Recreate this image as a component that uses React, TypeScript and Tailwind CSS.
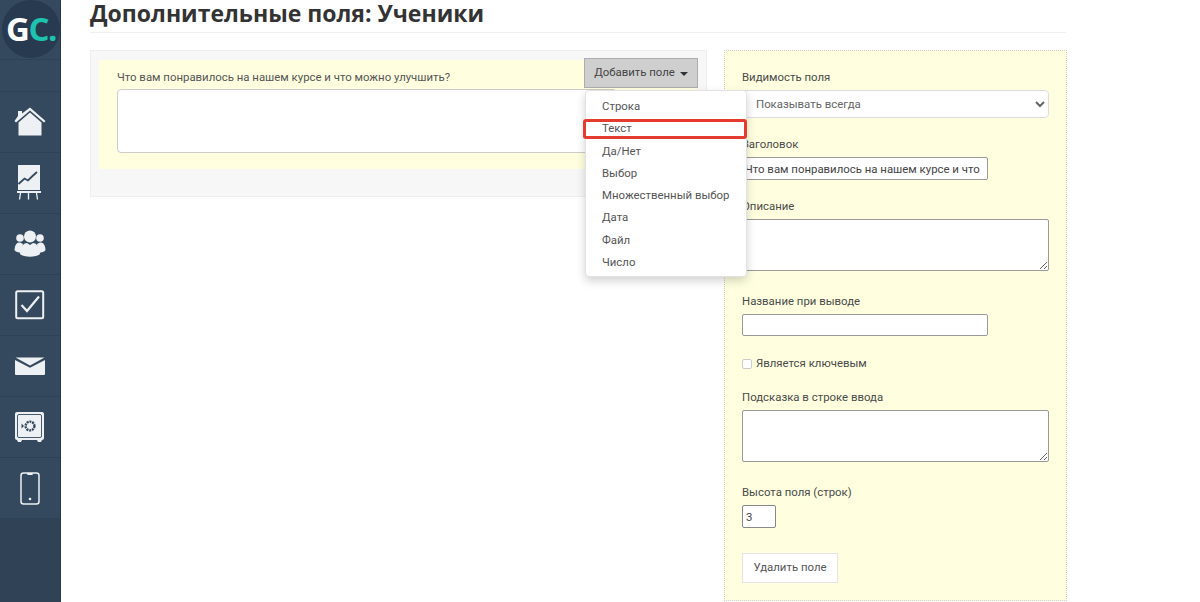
const MENU_ITEMS = ['Строка', 'Текст', 'Да/Нет', 'Выбор', 'Множественный выбор', 'Дата', 'Файл', 'Число']

const ICON = '#edf1f3'

function HomeIcon() {
  return (
    <svg width="32" height="30" viewBox="0 0 32 30">
      <path d="M4 9 V4 H8 V6.5 L16 0.5 L31.5 14 L30 15.5 L16 3.5 L2 15.5 L0.5 14 Z" fill={ICON} />
      <path d="M4.5 15.5 L16 5.5 L27.5 15.5 V28.5 H4.5 Z" fill={ICON} />
    </svg>
  )
}

function ChartIcon() {
  return (
    <svg width="26" height="36" viewBox="0 0 26 36">
      <rect x="1" y="0" width="22" height="25" fill={ICON} />
      <path d="M1.5 19 L7.5 13.5 L11 15.5 L15 11.5 L20 7" fill="none" stroke="#34495e" strokeWidth="1.8" />
      <rect x="0" y="26" width="24" height="2" fill={ICON} />
      <path d="M3.5 28 L2.5 34.5 M11.5 28 V34.5 M19.5 28 L20.5 34.5" stroke={ICON} strokeWidth="1.3" />
    </svg>
  )
}

function UsersIcon() {
  return (
    <svg width="32" height="28" viewBox="0 0 32 28">
      <circle cx="6" cy="8" r="3.8" fill={ICON} />
      <circle cx="26" cy="8" r="3.8" fill={ICON} />
      <path d="M0.5 20 C1 14 3 12.5 6 12.5 L9 14 L7.5 23 C4 22.5 1.5 22 0.5 20 Z" fill={ICON} />
      <path d="M31.5 20 C31 14 29 12.5 26 12.5 L23 14 L24.5 23 C28 22.5 30.5 22 31.5 20 Z" fill={ICON} />
      <circle cx="16" cy="6.5" r="6" fill={ICON} />
      <path d="M6 24 C7 16 10 13 13 13 L16 15 L19 13 C22 13 25 16 26 24 C22 27.5 10 27.5 6 24 Z" fill={ICON} />
    </svg>
  )
}

function CheckIcon() {
  return (
    <svg width="30" height="30" viewBox="0 0 30 30">
      <rect x="1.2" y="1.2" width="27" height="27" rx="1.5" fill="none" stroke={ICON} strokeWidth="2" />
      <path d="M6.5 15 L12 21 L24 6.5" fill="none" stroke={ICON} strokeWidth="2.2" />
    </svg>
  )
}

function MailIcon() {
  return (
    <svg width="30" height="18" viewBox="0 0 30 18">
      <path d="M0.5 0.5 H29.5 L15 8.5 Z" fill={ICON} />
      <path d="M0 3 L15 10.8 L30 3 V17 a1 1 0 0 1 -1 1 H1 a1 1 0 0 1 -1 -1 Z" fill={ICON} />
    </svg>
  )
}

function SafeIcon() {
  return (
    <svg width="30" height="31" viewBox="0 0 30 31">
      <rect x="0" y="0" width="29" height="28" rx="2" fill={ICON} />
      <rect x="2.5" y="2.5" width="24" height="23" rx="1.5" fill="none" stroke="#34495e" strokeWidth="0.9" />
      <path d="M2 28 H7 L6 30 H3 Z M22 28 H27 L26 30 H23 Z" fill={ICON} />
      <circle cx="15" cy="14" r="4.4" fill="none" stroke="#34495e" strokeWidth="2.4" strokeDasharray="2 0.8" />
      <path d="M6.5 11.5 L9 14 L6.5 16.5 Z" fill="#34495e" />
    </svg>
  )
}

function PhoneIcon() {
  return (
    <svg width="20" height="33" viewBox="0 0 20 33">
      <rect x="1" y="1" width="18" height="31" rx="2.5" fill="none" stroke={ICON} strokeWidth="1.5" />
      <path d="M7 1 H13 L12.5 3 H7.5 Z" fill={ICON} />
      <circle cx="10" cy="27" r="1.3" fill={ICON} />
    </svg>
  )
}

function NavItem({ children }: { children: React.ReactNode }) {
  return <div className="flex h-[61px] items-center justify-center border-b border-[#2e4257]">{children}</div>
}

function Field({ label, className, children }: { label: string; className: string; children: React.ReactNode }) {
  return (
    <div className={className}>
      <label className="mb-[5px] block h-[18px] leading-[20px] text-[#4a4a4a]">{label}</label>
      {children}
    </div>
  )
}

export default function App() {
  return (
    <div className="flex h-[602px] w-[1200px] overflow-hidden bg-white text-[11.4px] text-[#555] [font-family:Roboto,'Open_Sans',sans-serif]">
      <aside className="flex h-full w-[61px] shrink-0 flex-col border-r border-[#26384b] bg-[#2f4256]">
        <div className="h-[60px] border-b border-[#2e4257] bg-[#34495e] pl-[2px]">
          <div className="flex h-[58px] w-[58px] items-center justify-center rounded-full bg-[#273a4f] text-[33px] font-bold tracking-[-1.5px] [font-family:'Open_Sans',sans-serif]">
            <span className="text-white">G</span>
            <span className="text-[#1ec2ae]">C.</span>
          </div>
        </div>
        <div className="h-[32px] border-b border-[#2e4257] bg-[#34495e]" />
        <div className="bg-[#34495e]">
          <NavItem><HomeIcon /></NavItem>
          <NavItem><ChartIcon /></NavItem>
          <NavItem><UsersIcon /></NavItem>
          <NavItem><CheckIcon /></NavItem>
          <NavItem><MailIcon /></NavItem>
          <NavItem><SafeIcon /></NavItem>
          <NavItem><PhoneIcon /></NavItem>
        </div>
      </aside>

      <main className="w-[1005px] shrink-0 pl-[29px]">
        <h1 className="h-[33px] border-b border-[#eee] text-[23px] leading-[26px] font-bold text-[#333] [font-family:'Open_Sans',sans-serif]">
          Дополнительные поля: Ученики
        </h1>

        <div className="mt-[17px] flex items-start gap-[17px]">
          <section className="h-[147px] w-[617px] shrink-0 border border-[#eee] bg-[#f7f7f7] pt-[9px] pr-[9px] pl-[8px]">
            <div className="relative h-[109px] bg-[#ffffe0] px-[18px] pt-[8px]">
              <div className="h-[21px] leading-[18px] text-[#555]">
                Что вам понравилось на нашем курсе и что можно улучшить?
              </div>
              <div className="h-[64px] w-[500px] rounded-[4px] border border-[#ccc] bg-white" />

              <button className="absolute top-[-2px] right-[-1px] flex h-[30px] w-[114px] items-center justify-center gap-[5px] border border-[#adadad] bg-[#cfcfcf] text-[#444]">
                Добавить поле
                <span className="mt-[1px] h-0 w-0 border-x-[4px] border-t-[4px] border-x-transparent border-t-[#333]" />
              </button>

              <div className="absolute top-[30px] left-[486px] z-10 h-[187px] w-[162px] rounded-[4px] border border-[#e2e2e2] bg-white pt-[4px] shadow-[0_4px_10px_rgba(0,0,0,0.18)]">
                {MENU_ITEMS.map((item) => (
                  <div key={item} className="h-[22.3px] pl-[16px] leading-[22px] whitespace-nowrap text-[#555]">
                    {item}
                  </div>
                ))}
                <div className="absolute top-[28px] left-[-3px] h-[20px] w-[164px] rounded-[3px] border-[3px] border-[#e53a30]" />
              </div>
            </div>
          </section>

          <section className="h-[551px] w-[343px] shrink-0 border border-dotted border-[#ccc] bg-[#ffffe0] pt-[16px] pl-[17px]">
            <Field label="Видимость поля" className="">
              <select className="mt-[1px] block h-[28px] w-[307px] rounded-[4px] border border-[#ddd] bg-white pl-[9px] text-[#666]">
                <option>Показывать всегда</option>
              </select>
            </Field>
            <Field label="Заголовок" className="mt-[16px]">
              <input
                readOnly
                value="Что вам понравилось на нашем курсе и что можно улучшить?"
                className="block h-[23px] w-[246px] rounded-[2px] border border-[#999] bg-white pr-[6px] pl-[2px] text-[#444]"
              />
            </Field>
            <Field label="Описание" className="mt-[16px]">
              <textarea className="block h-[52px] w-[307px] rounded-[2px] border border-[#999] bg-white" />
            </Field>
            <Field label="Название при выводе" className="mt-[20px]">
              <input className="block h-[22px] w-[246px] rounded-[2px] border border-[#999] bg-white" />
            </Field>
            <label className="mt-[19px] flex h-[18px] items-center gap-[4px] text-[#4a4a4a]">
              <span className="h-[10px] w-[10px] rounded-[2px] border border-[#ccc] bg-white" />
              Является ключевым
            </label>
            <Field label="Подсказка в строке ввода" className="mt-[14px]">
              <textarea className="block h-[52px] w-[307px] rounded-[2px] border border-[#999] bg-white" />
            </Field>
            <Field label="Высота поля (строк)" className="mt-[20px]">
              <input readOnly value="3" className="block h-[23px] w-[34px] rounded-[2px] border border-[#888] bg-white px-[3px] text-[#444]" />
            </Field>
            <button className="mt-[25px] block h-[30px] w-[96px] border border-[#e4e4e4] bg-white text-[#555]">
              Удалить поле
            </button>
          </section>
        </div>
      </main>
    </div>
  )
}
